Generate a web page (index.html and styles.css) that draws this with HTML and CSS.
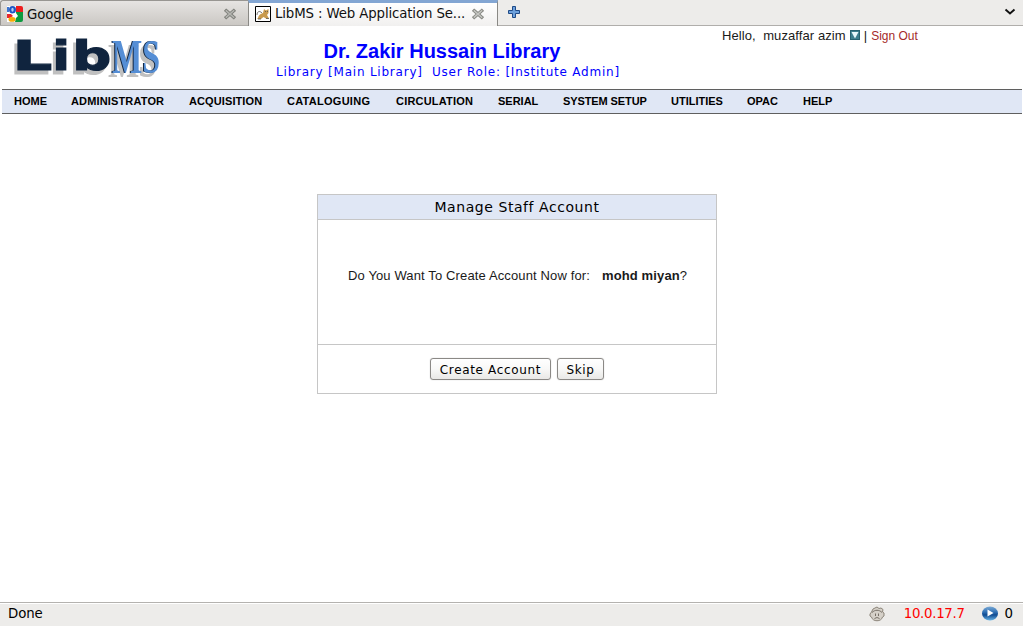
FILE: index.html
```html
<!DOCTYPE html>
<html lang="en">
<head>
<meta charset="utf-8">
<title>LibMS : Web Application Server</title>
<link rel="stylesheet" href="styles.css">
</head>
<body>
<div class="tabs">
  <div class="tab">
    <svg class="fav" width="16" height="16" viewBox="0 0 16 16"><path d="M0 0h10v16H0z" fill="#fff"/><path d="M9 0h5q2 0 2 2v4H9z" fill="#ee1c1c"/><path d="M9 6h7v8q0 2-2 2H8l1-4z" fill="#0b9a3e"/><path d="M0 8h4l2 2-3 2H0z" fill="#e9272d"/><path d="M0 1h2v5H0z" fill="#3c75cf"/><ellipse cx="5.500" cy="3.700" rx="3.500" ry="3.700" fill="#1d56c3"/><ellipse cx="5.500" cy="3.700" rx="1.200" ry="2" fill="#b7cdf3"/><path d="M5 8l4-1 2 3-2 2H5l2-2z" fill="#fff"/><ellipse cx="5" cy="13.400" rx="3.500" ry="2.400" fill="#f7ad08"/></svg>
    <span class="tab-title">Google</span>
    <svg class="close" width="12" height="12" viewBox="0 0 12 12"><path d="M2.300 2.800l7.400 6.400M9.700 2.800L2.300 9.200" stroke="#7d7e79" stroke-width="3.400" stroke-linecap="square"/><path d="M2.300 2.800l7.400 6.400M9.700 2.800L2.300 9.200" stroke="#b5b6b2" stroke-width="1.500" stroke-linecap="square"/></svg>
  </div>
  <div class="tab active">
    <svg class="fav" width="16" height="16" viewBox="0 0 16 16"><path d="M.5.5h15v15H.5z" fill="#fff" stroke="#000"/><path d="M3 12c1-4 3-4 5-5l1-4 2 1.500L13.500 3v4L12 9l2 3.500h-3L8.500 11 6 13H2z" fill="#c99a4d"/><path d="M2 9c0-3 2-5 5-2M3 13h3M11 12.500h3M10 5.500h1M12 5.500h1" stroke="#59564f" fill="none" stroke-width=".8"/></svg>
    <span class="tab-title">LibMS : Web Application Se...</span>
    <svg class="close" width="12" height="12" viewBox="0 0 12 12"><path d="M2.300 2.800l7.400 6.400M9.700 2.800L2.300 9.200" stroke="#858681" stroke-width="3.400" stroke-linecap="square"/><path d="M2.300 2.800l7.400 6.400M9.700 2.800L2.300 9.200" stroke="#c5c6c2" stroke-width="1.500" stroke-linecap="square"/></svg>
  </div>
  <svg class="plus" width="12" height="12" viewBox="0 0 12 12"><path d="M4.500.5h3v4h4v3h-4v4h-3v-4h-4v-3h4z" fill="#6ca0dc" stroke="#1f4a87" stroke-linejoin="round"/></svg>
  <svg class="chevron" width="12" height="8" viewBox="0 0 12 8"><path d="M1.500 1.500L6 5.500l4.500-4" fill="none" stroke="#111" stroke-width="1.900"/></svg>
</div>
<header class="header">
  <svg class="logo" width="156" height="46" viewBox="8 34 156 46">
    <g class="lib"><g transform="scale(2.500 1)">
      <text x="5" y="70.500" textLength="15.900" lengthAdjust="spacingAndGlyphs">L</text>
      <text x="20.900" y="70.500" textLength="7.100" lengthAdjust="spacingAndGlyphs">i</text>
      <text x="28.900" y="70.500" textLength="15.600" lengthAdjust="spacingAndGlyphs">b</text>
    </g></g>
    <text class="ms" x="112" y="73" textLength="48" lengthAdjust="spacingAndGlyphs">MS</text>
  </svg>
  <div class="heading">
    <h1>Dr. Zakir Hussain Library</h1>
    <p>Library [Main Library]&nbsp; User Role: [Institute Admin]</p>
  </div>
  <div class="user"><span class="name">Hello,&nbsp; muzaffar azim</span><svg width="10" height="10" viewBox="0 0 10 10"><path d="M0 0h10v10H0z" fill="#28616f"/><path d="M1 1h8v8H1z" fill="#3d7e8d"/><path d="M1.500 2h7L5 8.500z" fill="#e9f7fa"/></svg><span>|</span><a>Sign Out</a></div>
</header>
<nav class="nav">
  <a class="home">HOME</a><a class="administrator">ADMINISTRATOR</a><a class="acquisition">ACQUISITION</a><a class="cataloguing">CATALOGUING</a><a class="circulation">CIRCULATION</a><a class="serial">SERIAL</a><a class="setup">SYSTEM SETUP</a><a class="utilities">UTILITIES</a><a class="opac">OPAC</a><a>HELP</a>
</nav>
<main class="main">
  <section class="panel">
    <h2>Manage Staff Account</h2>
    <div class="question"><span>Do You Want To Create Account Now for:</span><span class="who"><b>mohd miyan</b>?</span></div>
    <div class="actions"><button class="create">Create Account</button><button class="skip">Skip</button></div>
  </section>
</main>
<footer class="status">
  <span class="done">Done</span>
  <svg class="monkey" width="16" height="16" viewBox="0 0 16 16"><path d="M2.500 6L1 8v2l1.500 1c1 5 10 5 11 0L15 10V7l-1.500-1 .5-2.500L12 2l-2 .5L8 1 4 3z" fill="#d5d0c8" stroke="#8b8479"/><path d="M3 6.500c3-3 7-3 10 0M6.500 7.500v2.500M9.500 7.500v2.500M5.500 12.500q2.500-2 5 0" fill="none" stroke="#777067"/></svg>
  <span class="ip">10.0.17.7</span>
  <svg class="globe" width="16" height="15" viewBox="0 0 16 15"><defs><linearGradient id="blue" x2="0" y2="1"><stop stop-color="#7caad5"/><stop offset=".4" stop-color="#2f70b4"/><stop offset=".6" stop-color="#104b91"/><stop offset="1" stop-color="#69b5e7"/></linearGradient></defs><ellipse cx="8" cy="7.500" rx="8" ry="7" fill="url(#blue)"/><path d="M5.500 3.500l6 3.500-6 3.500z" fill="#fff"/></svg>
  <span>0</span>
</footer>
</body>
</html>
```
FILE: styles.css
```css
* { box-sizing: border-box; }
body { margin: 0; width: 1023px; height: 626px; display: flex; flex-direction: column; overflow: hidden; background: #fff; color: #1a1a1a; font: 13px "Liberation Sans", Arial, sans-serif; }
.tabs { height: 26px; flex: none; display: flex; background: #edecea; border-bottom: 1px solid #b0aeab; color: #111; font: 13.33px "DejaVu Sans", sans-serif; }
.tab { width: 248px; height: 25px; display: flex; align-items: center; padding: 2px 12px 0 6px; border: 1px solid #989692; border-bottom: 0; border-right: 0; border-radius: 3px 0 0 0; background: linear-gradient(#e6e4e2, #cbc8c4); white-space: nowrap; }
.tab.active { width: 250px; height: 26px; border: solid #8a8985; border-width: 0 1px; border-top: 3px solid #83a6d3; border-radius: 0; padding: 0 13px 2px 6px; background: linear-gradient(#fff, #f1f0ef); }
.fav { margin-right: 4px; flex: none; }
.tab-title { flex: 1; letter-spacing: -.15px; }
.active .tab-title { letter-spacing: -.13px; }
.close { flex: none; }
.plus { margin: 6px 0 0 10px; }
.chevron { margin: 8px 7px 0 auto; }
.header { height: 63px; flex: none; display: flex; align-items: flex-start; }
.logo { margin: 8px 0 0 8px; flex: none; overflow: visible; }
.lib { font: bold 40px "DejaVu Sans", sans-serif; fill: #10243e; stroke: #10243e; stroke-width: 1.1px; filter: drop-shadow(-3px 4px 0 #c0c0c0); }
.ms { font: bold 49px "Liberation Serif", serif; fill: #558ed5; filter: drop-shadow(-1px 0 0 #10243e) drop-shadow(-3px 4px 0 #c0c0c0); }
.heading { width: 556px; flex: none; text-align: center; color: #00f; }
.heading h1 { margin: 14px 0 0; font-size: 20px; line-height: 23px; }
.heading p { margin: 1px 0 0 12px; font: 12px/16px "DejaVu Sans", sans-serif; letter-spacing: .78px; white-space: nowrap; }
.user { margin: 2px 0 0 2px; display: flex; line-height: 16px; white-space: nowrap; }
.name { letter-spacing: .09px; }
.user svg { margin: 2px 4px 0 4px; }
.user a { margin-left: 4px; color: #a52a2a; font-size: 12px; }
.nav { height: 25px; flex: none; margin: 0 1px 0 2px; padding-left: 12px; display: flex; background: #e0e7f5; border: solid #5f5f5f; border-width: 1px 0; font: bold 11px/23px "Liberation Sans", Arial, sans-serif; white-space: nowrap; color: #000; }
.nav a { flex: none; }
.home { width: 57px; }
.administrator { width: 118px; letter-spacing: .15px; }
.acquisition { width: 98px; letter-spacing: .1px; }
.cataloguing { width: 109px; letter-spacing: .27px; }
.circulation { width: 102px; letter-spacing: .2px; }
.serial { width: 65px; }
.setup { width: 108px; letter-spacing: -.1px; }
.utilities { width: 76px; }
.opac { width: 56px; }
.main { flex: 1; padding: 80px 0 0 317px; }
.panel { width: 400px; height: 200px; border: 1px solid #c6c6c6; display: flex; flex-direction: column; }
.panel h2 { margin: 0; height: 25px; background: #e0e7f5; border-bottom: 1px solid #c6c6c6; text-align: center; font: 14px/24px "DejaVu Sans", sans-serif; letter-spacing: .56px; color: #000; }
.question { height: 125px; border-bottom: 1px solid #c6c6c6; display: flex; padding: 48px 0 0 30px; line-height: 16px; letter-spacing: .13px; white-space: nowrap; }
.who { margin-left: 12px; }
.actions { flex: 1; display: flex; justify-content: center; padding-top: 13px; gap: 6px; }
button { height: 22px; padding: 2px 0 0; border: 1px solid #8b8986; border-radius: 3px; background: linear-gradient(#fff, #f8f8f7 50%, #e9e8e6); box-shadow: 0 0 1px #aaa; font: 12px "DejaVu Sans", sans-serif; letter-spacing: .66px; color: #000; }
.create { width: 121px; }
.skip { width: 47px; }
.status { height: 24px; flex: none; display: flex; align-items: center; padding: 0 10px 2px 8px; background: #edecea; border-top: 1px solid #b4b2af; box-shadow: inset 0 1px #fff; font: 13.33px "DejaVu Sans", sans-serif; letter-spacing: -.1px; color: #000; }
.done { flex: 1; }
.ip { margin: 0 17px 0 19px; color: #f00; letter-spacing: -.3px; }
.globe { margin-right: 7px; }
```
